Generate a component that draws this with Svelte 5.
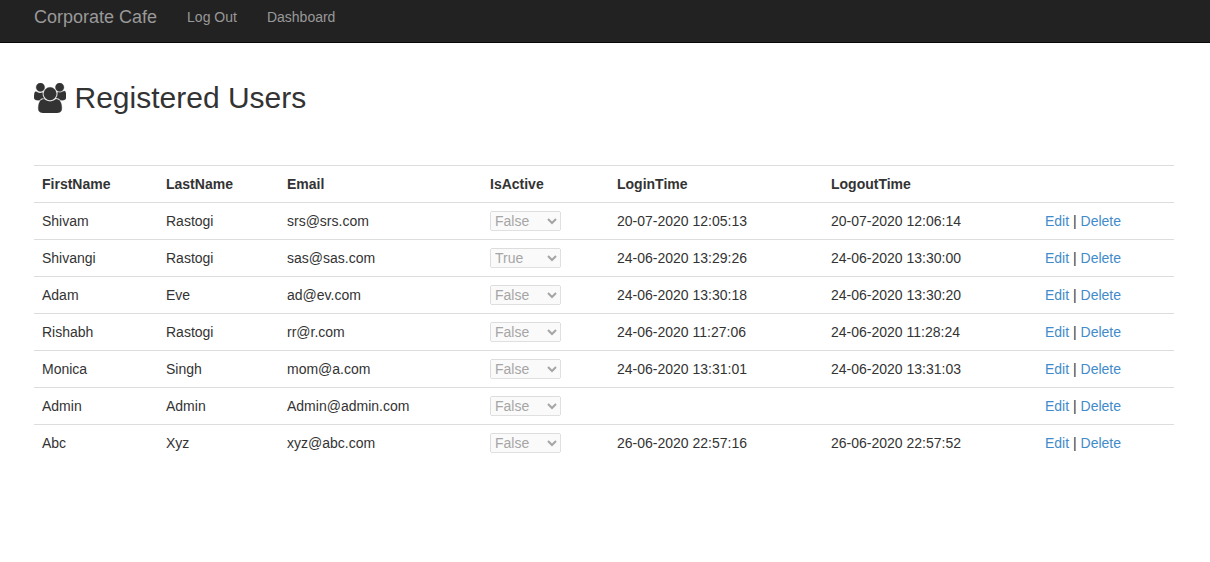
<script>
  const users = [
    ['Shivam', 'Rastogi', 'srs@srs.com', 'False', '20-07-2020 12:05:13', '20-07-2020 12:06:14'],
    ['Shivangi', 'Rastogi', 'sas@sas.com', 'True', '24-06-2020 13:29:26', '24-06-2020 13:30:00'],
    ['Adam', 'Eve', 'ad@ev.com', 'False', '24-06-2020 13:30:18', '24-06-2020 13:30:20'],
    ['Rishabh', 'Rastogi', 'rr@r.com', 'False', '24-06-2020 11:27:06', '24-06-2020 11:28:24'],
    ['Monica', 'Singh', 'mom@a.com', 'False', '24-06-2020 13:31:01', '24-06-2020 13:31:03'],
    ['Admin', 'Admin', 'Admin@admin.com', 'False', '', ''],
    ['Abc', 'Xyz', 'xyz@abc.com', 'False', '26-06-2020 22:57:16', '26-06-2020 22:57:52']
  ];
  const columns = [
    ['FirstName', 124],
    ['LastName', 121],
    ['Email', 203],
    ['IsActive', 127],
    ['LoginTime', 214],
    ['LogoutTime', 214],
    ['', 137]
  ];
</script>

<nav class="navbar">
  <a class="brand" href="#home">Corporate Cafe</a>
  <a class="link" href="#logout">Log Out</a>
  <a class="link" href="#dashboard">Dashboard</a>
</nav>

<main>
  <h2>
    <svg class="users-icon" viewBox="0 0 1920 1792" preserveAspectRatio="none" aria-hidden="true">
      <path d="M593 896q-162 5-265 128h-134q-82 0-138-40.5t-56-118.5q0-353 124-353 6 0 43.5 21t97.5 42.5 119 21.5q67 0 133-23-5 37-5 66 0 159 93 293zm1071 637q0 120-73 189.5t-194 69.5h-874q-121 0-194-69.5t-73-189.5q0-53 3.5-103.5t14-109 26.5-108.5 43-97.5 62-81 85.5-53.5 111.5-20q10 0 43 21.5t73 48 107 48 135 21.5 135-21.5 107-48 73-48 43-21.5q61 0 111.5 20t85.5 53.5 62 81 43 97.5 26.5 108.5 14 109 3.5 103.5zm-1024-1277q0 106-75 181t-181 75-181-75-75-181 75-181 181-75 181 75 75 181zm704 384q0 159-112.5 271.5t-271.5 112.5-271.5-112.5-112.5-271.5 112.5-271.5 271.5-112.5 271.5 112.5 112.5 271.5zm576 225q0 78-56 118.5t-138 40.5h-134q-103-123-265-128 93-134 93-293 0-29-5-66 66 23 133 23 59 0 119-21.5t97.5-42.5 43.5-21q124 0 124 353zm-128-609q0 106-75 181t-181 75-181-75-75-181 75-181 181-75 181 75 75 181z" />
    </svg>
    <span>Registered Users</span>
  </h2>

  <table>
    <colgroup>
      {#each columns as [, width]}
        <col style="width: {width}px" />
      {/each}
    </colgroup>
    <thead>
      <tr>
        {#each columns as [label]}
          <th>{label}</th>
        {/each}
      </tr>
    </thead>
    <tbody>
      {#each users as [first, last, email, active, login, logout]}
        <tr>
          <td>{first}</td>
          <td>{last}</td>
          <td>{email}</td>
          <td class="active-cell">
            <select disabled value={active}>
              <option>True</option>
              <option>False</option>
            </select>
          </td>
          <td>{login}</td>
          <td>{logout}</td>
          <td><a href="#edit">Edit</a> | <a href="#delete">Delete</a></td>
        </tr>
      {/each}
    </tbody>
  </table>
</main>

<style>
  :global(body) {
    font: 14px/20px "Liberation Sans", Arial, sans-serif;
    color: #333;
    background: #fff;
    overflow: hidden;
  }
  a {
    color: #428bca;
    text-decoration: none;
  }
  .navbar {
    display: flex;
    height: 42px;
    padding-left: 34px;
    background: #222;
    border-bottom: 1px solid #080808;
  }
  .navbar a {
    color: #999;
    padding-top: 7px;
  }
  .navbar .brand {
    font-size: 18px;
    margin-right: 15px;
  }
  .navbar .link {
    padding-left: 15px;
    padding-right: 15px;
  }
  main {
    width: 1140px;
    margin-left: 34px;
    padding-top: 39px;
  }
  h2 {
    display: flex;
    align-items: center;
    gap: 8.4px;
    height: 32px;
    margin: 0 0 51px;
    font-size: 30px;
    line-height: 32px;
    font-weight: 400;
  }
  .users-icon {
    width: 32.1px;
    height: 30px;
    fill: #333;
    stroke: #333;
    stroke-width: 16;
  }
  table {
    width: 1140px;
    table-layout: fixed;
    border-collapse: separate;
    border-spacing: 0;
  }
  th,
  td {
    box-sizing: border-box;
    height: 37px;
    padding: 8px;
    border-top: 1px solid #ddd;
    text-align: left;
    vertical-align: top;
    white-space: nowrap;
  }
  select {
    display: block;
    box-sizing: border-box;
    width: 71px;
    height: 20px;
    margin: 0;
    font: inherit;
  }
</style>
